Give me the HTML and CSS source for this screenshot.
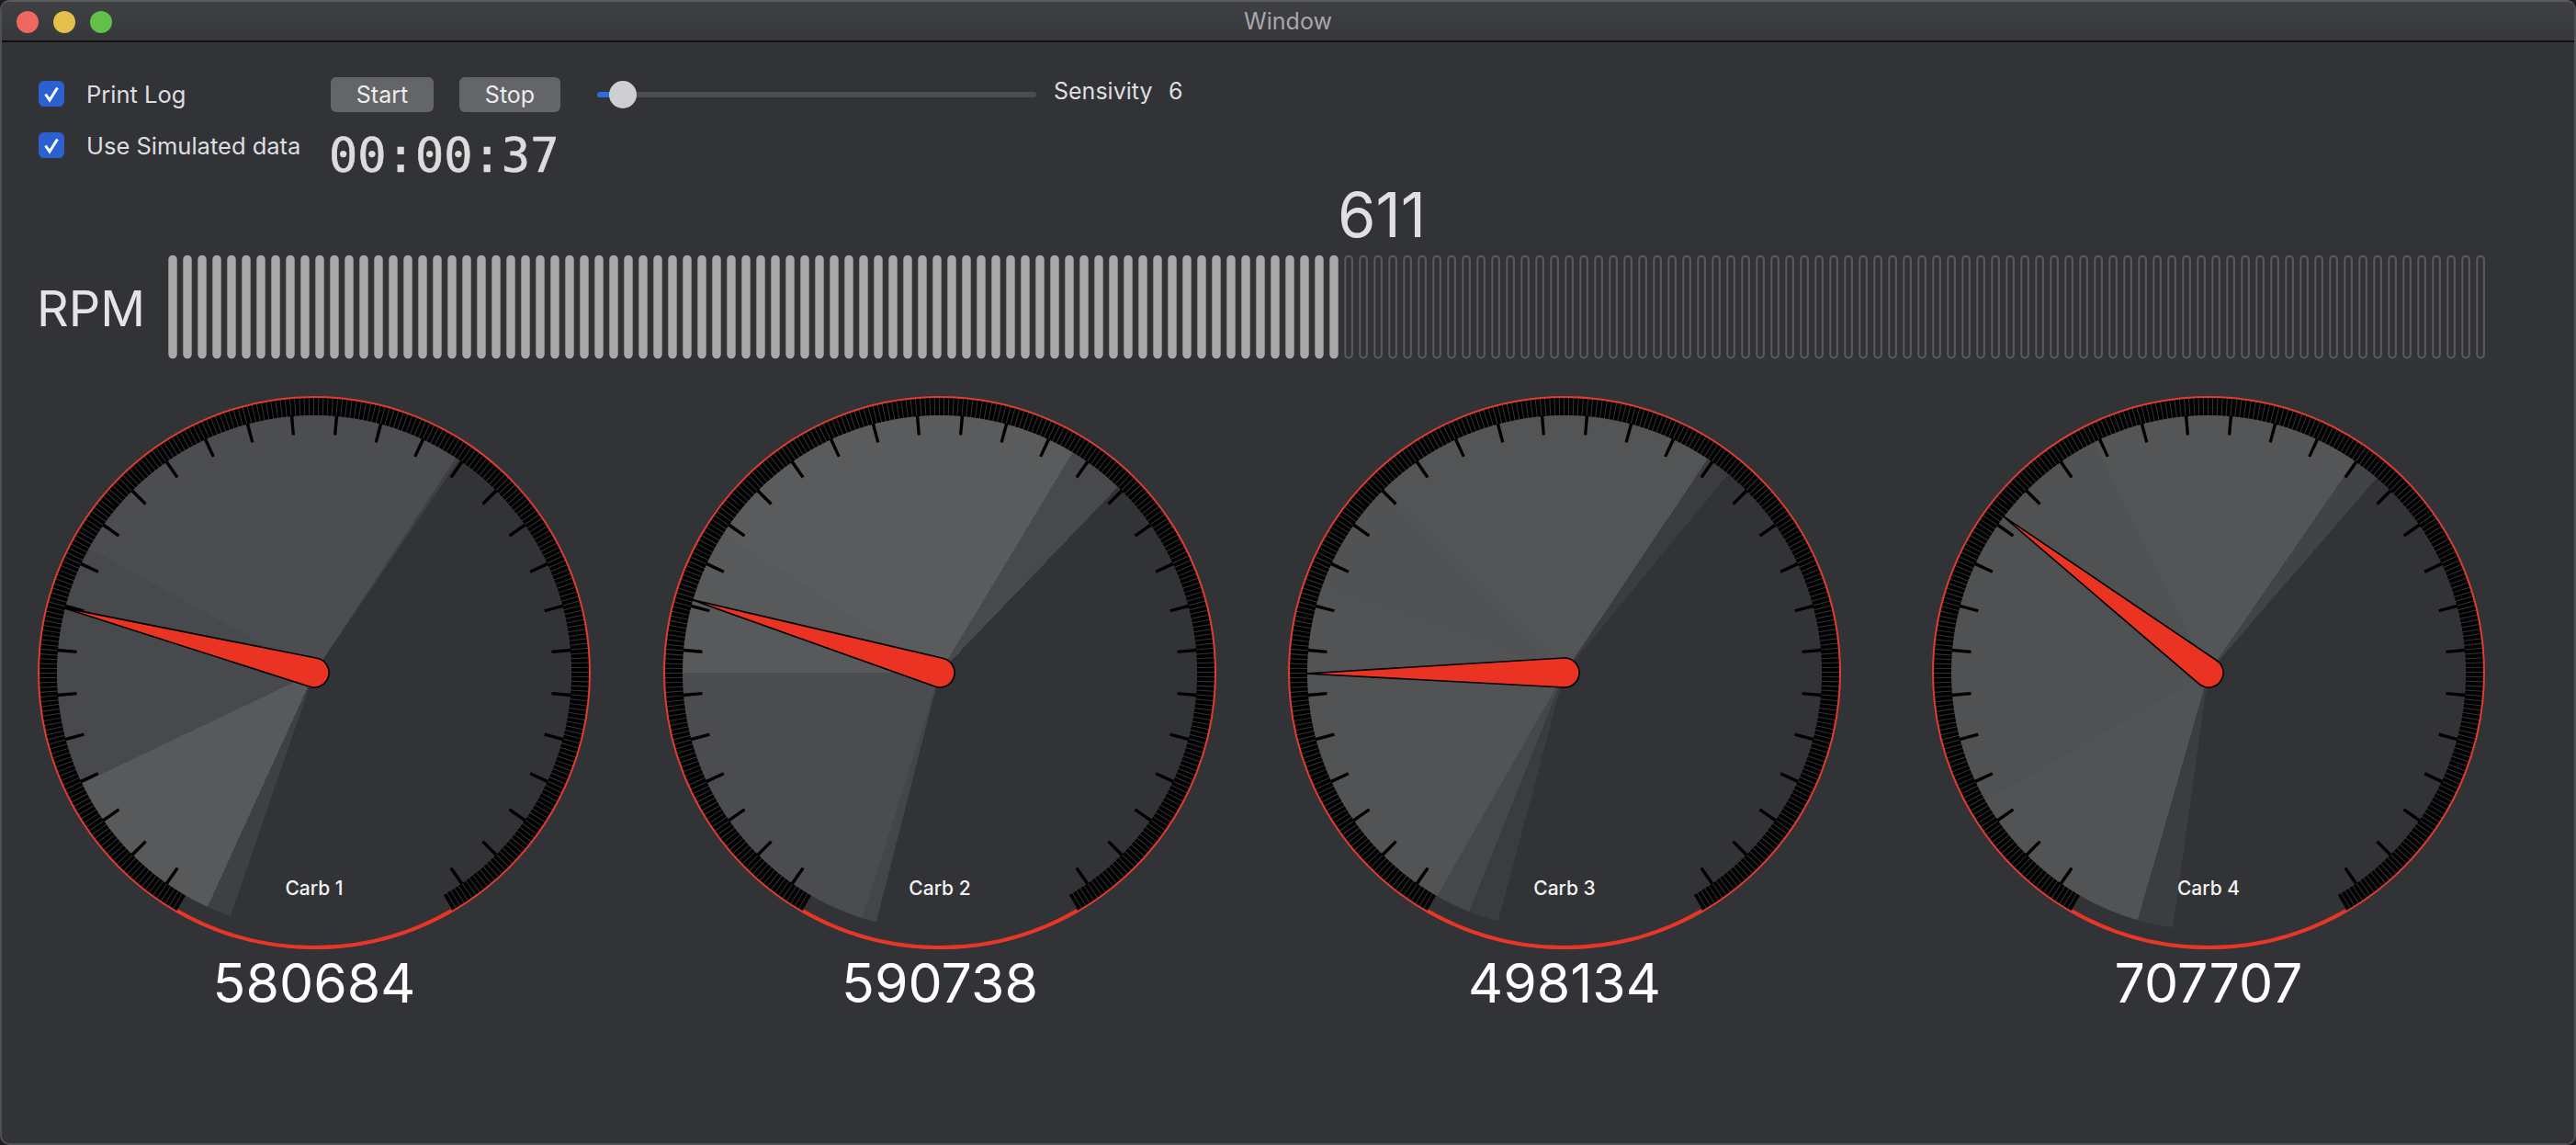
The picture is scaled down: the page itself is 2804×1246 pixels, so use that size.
FILE: index.html
```html
<!DOCTYPE html>
<html lang="en">
    <head>
        <title>Window</title>
        <meta charset="UTF-8" />
        <link rel="stylesheet" href="styles.css">
    </head>
    <body>
        <svg class="defs" width="0" height="0">
            <defs>
                <pattern id="ledFull" width="16" height="114" patternUnits="userSpaceOnUse">
                    <rect x="0.3" y="0.7" width="9.4" height="112.6" rx="4.7" fill="#a9a9aa" />
                </pattern>
                <pattern id="ledEmpty" width="16" height="114" patternUnits="userSpaceOnUse">
                    <rect x="1.3" y="1.7" width="7.6" height="110.6" rx="3.8" fill="none" stroke="#5a5b5e" stroke-width="2" />
                </pattern>
                <symbol id="dialScale" viewBox="-301 -301 602 602">
                    <path class="rim-thick" d="M-149.5 259 A299 299 0 0 0 149.5 259" />
                    <path class="fine-ticks" d="M-144.8 250.8 A289.6 289.6 0 1 1 144.8 250.8" pathLength="300" />
                    <path class="major-ticks" d="M-135 233.8 A270 270 0 1 1 135 233.8" pathLength="300" />
                    <circle class="rim-thin" r="300" />
                </symbol>
                <symbol id="needle" viewBox="-301 -301 602 602">
                    <path class="needle-shape" d="M0 -282 L15.97 -0.91 A16 16 0 1 1 -15.97 -0.91 Z" />
                </symbol>
            </defs>
        </svg>

        <div class="window">
            <div class="titlebar">
                <div class="lights">
                    <span class="light red"></span>
                    <span class="light yellow"></span>
                    <span class="light green"></span>
                </div>
                <div class="title">Window</div>
            </div>

            <div class="controls">
                <div class="checks">
                    <label class="check">
                        <span class="box">
                            <svg viewBox="0 0 28 28" width="28" height="28"><path d="M7.5 14.5 L12 21 L20.5 7.5" fill="none" stroke="#fff" stroke-width="3" /></svg>
                        </span>
                        Print Log
                    </label>
                    <label class="check">
                        <span class="box">
                            <svg viewBox="0 0 28 28" width="28" height="28"><path d="M7.5 14.5 L12 21 L20.5 7.5" fill="none" stroke="#fff" stroke-width="3" /></svg>
                        </span>
                        Use Simulated data
                    </label>
                </div>
                <div class="run">
                    <div class="buttons">
                        <button class="start">Start</button>
                        <button class="stop">Stop</button>
                    </div>
                    <div class="timer">00:00:37</div>
                </div>
                <div class="slider">
                    <div class="slider-fill"></div>
                    <div class="slider-thumb"></div>
                </div>
                <div class="sens-label">Sensivity</div>
                <div class="sens-value">6</div>
            </div>

            <div class="rpm-value">611</div>
            <div class="rpm">
                <div class="rpm-label">RPM</div>
                <svg class="rpm-bar" width="2528" height="114">
                    <rect width="1280" height="114" fill="url(#ledFull)" />
                    <rect x="1280" width="1248" height="114" fill="url(#ledEmpty)" />
                </svg>
            </div>

            <div class="gauges">
                <div class="gauge">
                    <div class="dial">
                        <div class="face face-1"></div>
                        <svg class="dial-art" viewBox="-301 -301 602 602">
                            <use href="#dialScale" x="-301" y="-301" width="602" height="602" />
                            <use href="#needle" x="-301" y="-301" width="602" height="602" transform="rotate(-75.5)" />
                        </svg>
                        <div class="carb">Carb 1</div>
                    </div>
                    <div class="count">580684</div>
                </div>
                <div class="gauge">
                    <div class="dial">
                        <div class="face face-2"></div>
                        <svg class="dial-art" viewBox="-301 -301 602 602">
                            <use href="#dialScale" x="-301" y="-301" width="602" height="602" />
                            <use href="#needle" x="-301" y="-301" width="602" height="602" transform="rotate(-73.6)" />
                        </svg>
                        <div class="carb">Carb 2</div>
                    </div>
                    <div class="count">590738</div>
                </div>
                <div class="gauge">
                    <div class="dial">
                        <div class="face face-3"></div>
                        <svg class="dial-art" viewBox="-301 -301 602 602">
                            <use href="#dialScale" x="-301" y="-301" width="602" height="602" />
                            <use href="#needle" x="-301" y="-301" width="602" height="602" transform="rotate(-90.2)" />
                        </svg>
                        <div class="carb">Carb 3</div>
                    </div>
                    <div class="count">498134</div>
                </div>
                <div class="gauge">
                    <div class="dial">
                        <div class="face face-4"></div>
                        <svg class="dial-art" viewBox="-301 -301 602 602">
                            <use href="#dialScale" x="-301" y="-301" width="602" height="602" />
                            <use href="#needle" x="-301" y="-301" width="602" height="602" transform="rotate(-52.7)" />
                        </svg>
                        <div class="carb">Carb 4</div>
                    </div>
                    <div class="count">707707</div>
                </div>
            </div>
        </div>
    </body>
</html>
```

FILE: styles.css
```css
body {
    font-family: Inter, "Liberation Sans", sans-serif;
    margin: 0;
    padding: 0;
    overflow: hidden;
    width: 100%;
    height: 100vh;
    background-color: #1c1c1e;
}
.defs {
    display: block;
    height: 0;
}
.window {
    box-sizing: border-box;
    height: 100vh;
    border: 2px solid #4f5052;
    border-top-color: #5a5b5d;
    border-radius: 10px;
    background-color: #323337;
    overflow: hidden;
}
.titlebar {
    display: flex;
    align-items: center;
    justify-content: center;
    position: relative;
    height: 42px;
    background: linear-gradient(#3f4043, #37383b);
    border-bottom: 2px solid #111;
}
.lights {
    position: absolute;
    left: 16px;
    top: 10px;
    display: flex;
    gap: 16px;
}
.light {
    width: 24px;
    height: 24px;
    border-radius: 50%;
}
.red { background-color: #f0675e; }
.yellow { background-color: #e6bf4a; }
.green { background-color: #62c049; }
.title {
    font-size: 25px;
    color: #a8a8aa;
}

.controls {
    display: flex;
    align-items: flex-start;
    height: 146px;
    padding: 38px 0 0 40px;
    box-sizing: border-box;
    color: #dedee0;
    font-size: 25.5px;
}
.checks {
    display: flex;
    flex-direction: column;
    gap: 28px;
    width: 318px;
    padding-top: 4px;
}
.check {
    display: flex;
    align-items: center;
    gap: 24px;
    height: 28px;
}
.box {
    width: 28px;
    height: 28px;
    border-radius: 6px;
    background-color: #2a60d0;
}
.box svg {
    display: block;
}
.run {
    width: 290px;
}
.buttons {
    display: flex;
    gap: 28px;
}
button {
    height: 38px;
    padding: 0;
    border: 0;
    border-radius: 6px;
    background-color: #646568;
    color: #ececec;
    font-family: inherit;
    font-size: 25px;
}
.start { width: 112px; }
.stop { width: 110px; }
.timer {
    margin-top: 17px;
    margin-left: -2px;
    font-family: "DejaVu Sans Mono", monospace;
    font-size: 52px;
    line-height: 60px;
    color: #dcdcdc;
    -webkit-text-stroke: 0.6px #dcdcdc;
}
.slider {
    position: relative;
    width: 478px;
    height: 6px;
    margin: 16px 19px 0 0;
    border-radius: 3px;
    background-color: #4c4d51;
}
.slider-fill {
    width: 28px;
    height: 6px;
    border-radius: 3px;
    background-color: #2d6cdf;
}
.slider-thumb {
    position: absolute;
    left: 13px;
    top: -12px;
    width: 30px;
    height: 30px;
    border-radius: 50%;
    background-color: #cfcfd2;
}
.sens-label {
    width: 125px;
    font-size: 25px;
}
.sens-value {
    font-size: 25px;
}
.rpm-value {
    margin: 9px 0 0 1454px;
    font-size: 67px;
    line-height: 66px;
    color: #e0e0e2;
}
.rpm {
    display: flex;
    align-items: center;
    margin-top: 10px;
    padding-left: 38px;
}
.rpm-label {
    width: 143px;
    font-size: 54px;
    line-height: 80px;
    margin-top: 3px;
    color: #e4e4e6;
}
.rpm-bar {
    display: block;
}

.gauges {
    display: grid;
    grid-template-columns: 681px 680px 701px 602px;
    margin-top: 40px;
    padding-left: 39px;
}
.gauge {
    width: 602px;
}
.dial {
    position: relative;
    width: 602px;
    height: 602px;
}
.face {
    position: absolute;
    inset: 21px;
    border-radius: 50%;
}
.face-1 {
    background: conic-gradient(from -180deg, transparent 0 19deg, #3f4043 19deg 24.5deg, #58595b 24.5deg 64.5deg, #48494c 64.5deg 119deg, #4c4d50 119deg 213.4deg, #3f4043 213.4deg 214.2deg, transparent 214.2deg);
}
.face-2 {
    background: conic-gradient(from -180deg, transparent 0 14.3deg, #444548 14.3deg 17.5deg, #4b4c4f 17.5deg 90deg, #58595b 90deg 123deg, #5a5b5d 123deg 211.1deg, #48494c 211.1deg 223.8deg, transparent 223.8deg);
}
.face-3 {
    background: conic-gradient(from -180deg, transparent 0 15deg, #3b3c3f 15deg 21.8deg, #46474a 21.8deg 29.7deg, #525355 29.7deg 109deg, #515254 109deg 135deg, #535456 135deg 213.8deg, #3b3c3f 213.8deg 219.5deg, transparent 219.5deg);
}
.face-4 {
    background: conic-gradient(from -180deg, transparent 0 8deg, #3c3d40 8deg 16deg, #525355 16deg 60deg, #505153 60deg 153.5deg, #545557 153.5deg 214.6deg, #424346 214.6deg 220.8deg, transparent 220.8deg);
}
.dial-art {
    position: absolute;
    inset: 0;
    width: 602px;
    height: 602px;
}
.rim-thick {
    fill: none;
    stroke: #ea3323;
    stroke-width: 4;
}
.rim-thin {
    fill: none;
    stroke: #e23a2c;
    stroke-width: 2;
}
.fine-ticks {
    fill: none;
    stroke: #000;
    stroke-width: 19;
    stroke-dasharray: 0.8 0.2;
}
.major-ticks {
    fill: none;
    stroke: #000;
    stroke-width: 21;
    stroke-dasharray: 0.72 9.28;
    stroke-dashoffset: -4.64;
}
.needle-shape {
    fill: #ea3323;
    stroke: #000;
    stroke-width: 1.6;
}
.carb {
    position: absolute;
    left: 0;
    right: 0;
    top: 524px;
    text-align: center;
    font-size: 21px;
    line-height: 24px;
    font-weight: 500;
    color: #f2f2f2;
}
.count {
    margin-top: 2px;
    text-align: center;
    font-size: 59px;
    line-height: 70px;
    color: #fff;
}
```
